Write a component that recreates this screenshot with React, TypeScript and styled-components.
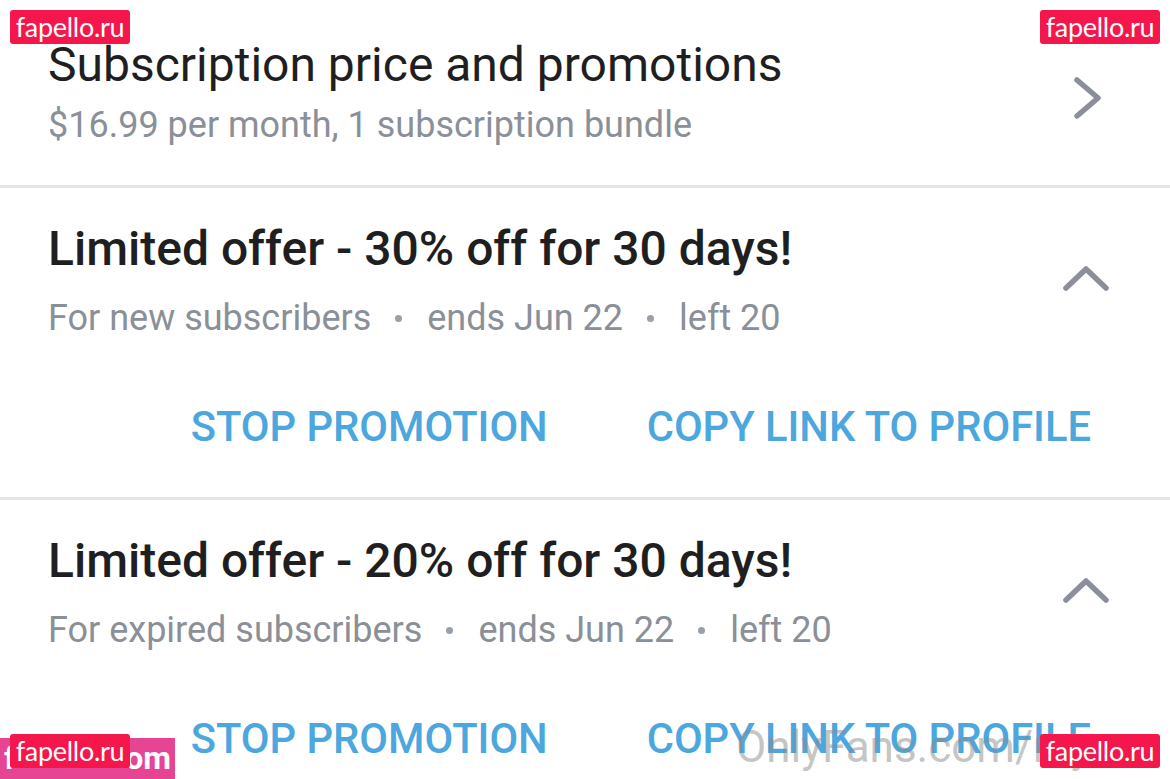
import React from "react";
import styled, { createGlobalStyle } from "styled-components";

const Global = createGlobalStyle`
  html, body { margin: 0; padding: 0; background: #ffffff; }
  body { font-family: Roboto, "Noto Sans", sans-serif; overflow: hidden; }
  * { box-sizing: border-box; }
`;

const Page = styled.div`
  position: relative;
  width: 1170px;
  height: 779px;
  overflow: hidden;
  background: #ffffff;
  display: flex;
  flex-direction: column;
`;

const Row = styled.div`
  display: flex;
  align-items: center;
  padding: 35px 62px 34px 48px;
  border-bottom: 3px solid #e3e4e6;
`;

const TextBlock = styled.div`
  flex: 1;
  display: flex;
  flex-direction: column;
`;

const Title = styled.div<{ $bold?: boolean }>`
  font-size: 48px;
  line-height: 60px;
  color: #1f1f21;
  font-weight: ${(p) => (p.$bold ? 500 : 400)};
  white-space: nowrap;
`;

const Sub = styled.div<{ $gap: number }>`
  font-size: 36px;
  line-height: 52px;
  margin-top: ${(p) => p.$gap}px;
  color: #8a8f98;
  white-space: nowrap;
  display: flex;
  align-items: center;
`;

const Dot = styled.span`
  display: inline-block;
  width: 7px;
  height: 7px;
  border-radius: 50%;
  background: #9aa0a8;
  margin: 0 25px 0 24px;
`;

const Section = styled.section`
  display: flex;
  flex-direction: column;
  padding: 31px 0 40px 48px;
  border-bottom: 3px solid #e3e4e6;
`;

const Head = styled.div`
  display: flex;
  align-items: flex-start;
`;

const IconBox = styled.div<{ $w: number; $top: number; $right: number }>`
  width: ${(p) => p.$w}px;
  margin-top: ${(p) => p.$top}px;
  margin-right: ${(p) => p.$right}px;
  display: flex;
  justify-content: center;
  color: #8a8f9b;
`;

const Actions = styled.div`
  display: flex;
  justify-content: flex-end;
  gap: 99px;
  padding-right: 79px;
  margin-top: 53px;
`;

const ActionButton = styled.button`
  border: none;
  background: none;
  padding: 0;
  font-family: Roboto, sans-serif;
  font-weight: 500;
  font-size: 41.7px;
  line-height: 60px;
  color: #4ba7de;
  white-space: nowrap;
  cursor: pointer;
`;

const Badge = styled.div<{ $left?: number; $right?: number; $top: number }>`
  position: absolute;
  top: ${(p) => p.$top}px;
  ${(p) => (p.$left !== undefined ? `left: ${p.$left}px;` : "")}
  ${(p) => (p.$right !== undefined ? `right: ${p.$right}px;` : "")}
  width: 120px;
  height: 34px;
  background: #f5164c;
  border-radius: 3px;
  color: #ffffff;
  font-family: Lato, "Open Sans", sans-serif;
  font-size: 27px;
  line-height: 34px;
  text-align: center;
  letter-spacing: -0.3px;
  z-index: 3;
`;

const PinkTag = styled.div`
  position: absolute;
  left: 0;
  top: 738px;
  width: 175px;
  height: 41px;
  background: #e64593;
  color: #ffffff;
  font-family: Roboto, sans-serif;
  font-weight: 700;
  font-size: 32px;
  line-height: 41px;
  padding: 0 4px;
  z-index: 2;
  display: flex;
  justify-content: space-between;
`;

const Mark = styled.div`
  position: absolute;
  left: 736px;
  top: 722px;
  font-family: Roboto, sans-serif;
  font-size: 44px;
  line-height: 50px;
  color: rgba(140, 140, 140, 0.5);
  white-space: nowrap;
  z-index: 2;
`;

const ChevronRight = () => (
  <svg width="30" height="44" viewBox="0 0 30 44" fill="none">
    <path d="M4 4 L25 22 L4 40" stroke="currentColor" strokeWidth="5.5" strokeLinecap="round" strokeLinejoin="round" />
  </svg>
);

const ChevronUp = () => (
  <svg width="48" height="30" viewBox="0 0 48 30" fill="none">
    <path d="M4 25 L24 6 L44 25" stroke="currentColor" strokeWidth="5.5" strokeLinecap="round" strokeLinejoin="round" />
  </svg>
);

type Offer = { title: string; who: string; ends: string; left: string };

const offers: Offer[] = [
  { title: "Limited offer - 30% off for 30 days!", who: "For new subscribers", ends: "ends Jun 22", left: "left 20" },
  { title: "Limited offer - 20% off for 30 days!", who: "For expired subscribers", ends: "ends Jun 22", left: "left 20" },
];

export default function App() {
  return (
    <>
      <Global />
      <Page>
        <Row>
          <TextBlock>
            <Title>Subscription price and promotions</Title>
            <Sub $gap={4}>$16.99 per month, 1 subscription bundle</Sub>
          </TextBlock>
          <IconBox $w={30} $top={10} $right={5}>
            <ChevronRight />
          </IconBox>
        </Row>
        {offers.map((o, i) => (
          <Section key={i}>
            <Head>
              <TextBlock>
                <Title $bold>{o.title}</Title>
                <Sub $gap={13}>
                  {o.who}
                  <Dot />
                  {o.ends}
                  <Dot />
                  {o.left}
                </Sub>
              </TextBlock>
              <IconBox $w={48} $top={44} $right={60}>
                <ChevronUp />
              </IconBox>
            </Head>
            <Actions>
              <ActionButton>STOP PROMOTION</ActionButton>
              <ActionButton>COPY LINK TO PROFILE</ActionButton>
            </Actions>
          </Section>
        ))}
        <Badge $left={10} $top={10}>fapello.ru</Badge>
        <Badge $right={10} $top={10}>fapello.ru</Badge>
        <PinkTag>
          <span>f</span>
          <span>om</span>
        </PinkTag>
        <Badge $left={10} $top={734}>fapello.ru</Badge>
        <Mark>OnlyFans.com/rayn</Mark>
        <Badge $right={10} $top={734}>fapello.ru</Badge>
      </Page>
    </>
  );
}
